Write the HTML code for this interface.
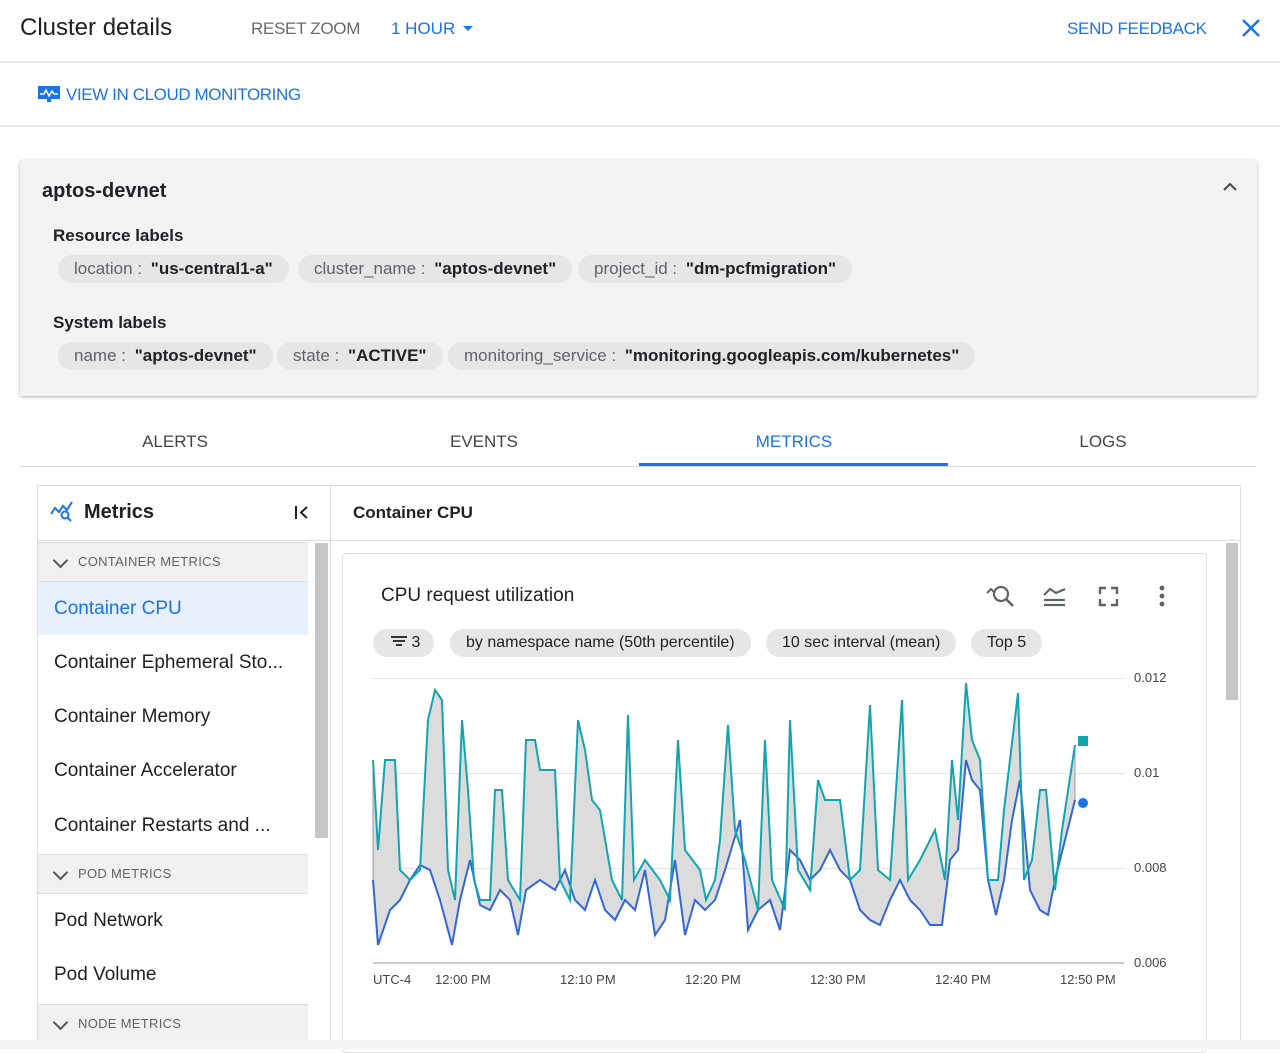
<!DOCTYPE html>
<html><head><meta charset="utf-8"><style>
*{box-sizing:border-box;margin:0;padding:0}
body{width:1280px;height:1049px;overflow:hidden;background:#fff;font-family:"Liberation Sans",Arial,sans-serif;color:#202124;position:relative}
.a{position:absolute;white-space:nowrap}
.chip{position:absolute;height:28px;border-radius:14px;background:#e6e6e6;font-size:17px;line-height:28px;padding:0 16px;color:#5f6368;white-space:nowrap}
.chip b{color:#202124;font-weight:bold;margin-left:4px}
.tab{position:absolute;top:432px;font-size:17px;color:#444;width:310px;text-align:center}
.blue{color:#1a73e8}
.item{position:absolute;left:54px;font-size:19px;color:#202124;white-space:nowrap}
.item.blue{color:#1a73e8}
.tab.blue{color:#1a73e8}
.sec{position:absolute;left:38px;width:270px;height:40px;background:#f1f1f1;border-top:1px solid #ddd;border-bottom:1px solid #ddd;font-size:13px;color:#5f6368;line-height:38px;padding-left:40px;letter-spacing:.3px}
.sec:before{content:"";position:absolute;left:17px;top:12px;width:9px;height:9px;border-right:2px solid #555;border-bottom:2px solid #555;transform:rotate(45deg)}
.pill{position:absolute;top:629px;height:28px;border-radius:14px;background:#e6e6e6;font-size:16px;line-height:28px;padding:0 16px;color:#202124;white-space:nowrap}
.yl{position:absolute;left:1134px;font-size:13px;color:#444}
.xl{position:absolute;top:972px;font-size:13px;color:#444}
</style></head><body>
<div class="a" style="left:20px;top:14px;font-size:24px">Cluster details</div>
<div class="a" style="left:251px;top:19px;font-size:17px;color:#6b6b6b;letter-spacing:-.3px">RESET ZOOM</div>
<div class="a blue" style="left:391px;top:19px;font-size:17px">1 HOUR</div>
<div class="a" style="left:463px;top:26px;border-left:5px solid transparent;border-right:5px solid transparent;border-top:5px solid #1a73e8"></div>
<div class="a blue" style="left:1067px;top:19px;font-size:17px;letter-spacing:-.3px">SEND FEEDBACK</div>
<svg class="a" style="left:1240px;top:17px" width="22" height="22" viewBox="0 0 22 22"><path d="M3 3L19 19M19 3L3 19" stroke="#1a73e8" stroke-width="2.4"/></svg>
<div class="a" style="left:0;top:61px;width:1280px;height:2px;background:#e8e8e8"></div>
<svg class="a" style="left:38px;top:86px" width="22" height="17" viewBox="0 0 22 17"><rect x="0" y="0" width="22" height="13" fill="#1a73e8"/><path d="M2 8L6 8L8 4L11 10L14 5L16 8L20 8" stroke="#fff" stroke-width="1.5" fill="none"/><rect x="9" y="13" width="4" height="3" fill="#1a73e8"/></svg>
<div class="a blue" style="left:66px;top:85px;font-size:17px;letter-spacing:-.4px">VIEW IN CLOUD MONITORING</div>
<div class="a" style="left:0;top:125px;width:1280px;height:2px;background:#e8e8e8"></div>

<div class="a" style="left:20px;top:160px;width:1237px;height:236px;background:#f3f3f3;box-shadow:0 1px 3px rgba(0,0,0,.3);border-radius:2px"></div>
<div class="a" style="left:42px;top:180px;font-size:20px;font-weight:bold">aptos-devnet</div>
<svg class="a" style="left:1221px;top:181px" width="18" height="12" viewBox="0 0 18 12"><path d="M3 9L9 3L15 9" stroke="#444" stroke-width="2" fill="none"/></svg>
<div class="a" style="left:53px;top:226px;font-size:17px;font-weight:bold">Resource labels</div>
<div class="chip" style="left:58px;top:255px">location : <b>"us-central1-a"</b></div>
<div class="chip" style="left:298px;top:255px">cluster_name : <b>"aptos-devnet"</b></div>
<div class="chip" style="left:578px;top:255px">project_id : <b>"dm-pcfmigration"</b></div>
<div class="a" style="left:53px;top:313px;font-size:17px;font-weight:bold">System labels</div>
<div class="chip" style="left:58px;top:342px">name : <b>"aptos-devnet"</b></div>
<div class="chip" style="left:277px;top:342px">state : <b>"ACTIVE"</b></div>
<div class="chip" style="left:448px;top:342px">monitoring_service : <b>"monitoring.googleapis.com/kubernetes"</b></div>

<div class="tab" style="left:20px">ALERTS</div>
<div class="tab" style="left:329px">EVENTS</div>
<div class="tab blue" style="left:639px">METRICS</div>
<div class="tab" style="left:948px">LOGS</div>
<div class="a" style="left:20px;top:466px;width:1237px;height:1px;background:#ddd"></div>
<div class="a" style="left:639px;top:463px;width:309px;height:3px;background:#1a73e8"></div>

<div class="a" style="left:37px;top:485px;width:1204px;height:560px;border:1px solid #ddd;border-bottom:none"></div>
<div class="a" style="left:330px;top:485px;width:1px;height:560px;background:#ddd"></div>
<div class="a" style="left:37px;top:540px;width:1204px;height:1px;background:#ddd"></div>
<svg class="a" style="left:50px;top:501px" width="24" height="22" viewBox="0 0 24 22"><path d="M1 13L5 7L9 11L13 5L17 9L22 1" stroke="#1a73e8" stroke-width="2" fill="none"/><circle cx="15" cy="14" r="3.5" stroke="#1a73e8" stroke-width="2" fill="#fff"/><path d="M17.5 16.5L21 20" stroke="#1a73e8" stroke-width="2"/></svg>
<div class="a" style="left:84px;top:501px;font-size:20px;font-weight:bold">Metrics</div>
<svg class="a" style="left:294px;top:505px" width="16" height="15" viewBox="0 0 16 15"><path d="M2 1V14M13 2L7 7.5L13 13" stroke="#222" stroke-width="2" fill="none"/></svg>
<div class="a" style="left:353px;top:503px;font-size:17px;font-weight:bold">Container CPU</div>

<div class="sec" style="top:542px">CONTAINER METRICS</div>
<div class="a" style="left:38px;top:582px;width:270px;height:53px;background:#e8f0fe"></div>
<div class="item blue" style="top:598px">Container CPU</div>
<div class="item" style="top:652px">Container Ephemeral Sto...</div>
<div class="item" style="top:706px">Container Memory</div>
<div class="item" style="top:760px">Container Accelerator</div>
<div class="item" style="top:815px">Container Restarts and ...</div>
<div class="sec" style="top:854px">POD METRICS</div>
<div class="item" style="top:910px">Pod Network</div>
<div class="item" style="top:964px">Pod Volume</div>
<div class="sec" style="top:1004px">NODE METRICS</div>
<div class="a" style="left:315px;top:543px;width:13px;height:295px;background:#c6c6c6"></div>
<div class="a" style="left:1226px;top:543px;width:12px;height:157px;background:#c6c6c6"></div>

<div class="a" style="left:342px;top:553px;width:865px;height:500px;border:1px solid #ddd;border-radius:4px"></div>
<div class="a" style="left:381px;top:585px;font-size:19px">CPU request utilization</div>
<svg class="a" style="left:984px;top:583px" width="200" height="28" viewBox="0 0 200 28"><circle cx="17" cy="11" r="7" stroke="#5f6368" stroke-width="2.2" fill="none"/><path d="M22 16L29 23" stroke="#5f6368" stroke-width="2.6"/><path d="M3 10L7 6L11 10" stroke="#5f6368" stroke-width="2" fill="none"/><path d="M60 12L66 6L72 10L81 6M60 17H81M60 22H81" stroke="#5f6368" stroke-width="2.2" fill="none"/><path d="M116 11V5H122M127 5H133V11M133 16V22H127M122 22H116V16" stroke="#5f6368" stroke-width="2.4" fill="none"/><circle cx="178" cy="5" r="2.4" fill="#5f6368"/><circle cx="178" cy="13" r="2.4" fill="#5f6368"/><circle cx="178" cy="21" r="2.4" fill="#5f6368"/></svg>
<div class="pill" style="left:373px;padding:0 14px 0 18px"><span style="display:inline-block;width:16px;vertical-align:middle;margin-top:-4px"><span style="display:block;height:2px;background:#333;margin:2px 0"></span><span style="display:block;height:2px;background:#333;margin:2px 2px"></span><span style="display:block;height:2px;background:#333;margin:2px 5px"></span></span> 3</div>
<div class="pill" style="left:450px">by namespace name (50th percentile)</div>
<div class="pill" style="left:766px">10 sec interval (mean)</div>
<div class="pill" style="left:971px">Top 5</div>

<svg class="a" style="left:0;top:0" width="1280" height="1049" viewBox="0 0 1280 1049">
<g stroke="#e4e4e4" stroke-width="1"><path d="M373 678.5H1124M373 773.5H1124M373 868.5H1124"/></g>
<path d="M373 963H1124" stroke="#999" stroke-width="1"/>
<g id="c"></g>
</svg>
<div class="yl" style="top:670px">0.012</div>
<div class="yl" style="top:765px">0.01</div>
<div class="yl" style="top:860px">0.008</div>
<div class="yl" style="top:955px">0.006</div>
<div class="xl" style="left:373px">UTC-4</div>
<div class="xl" style="left:435px">12:00 PM</div>
<div class="xl" style="left:560px">12:10 PM</div>
<div class="xl" style="left:685px">12:20 PM</div>
<div class="xl" style="left:810px">12:30 PM</div>
<div class="xl" style="left:935px">12:40 PM</div>
<div class="xl" style="left:1060px">12:50 PM</div>
<div class="a" style="left:0;top:1040px;width:1280px;height:9px;background:#f4f4f4"></div>
<script>
var t="373,760 378,850 385,760 395,760 400,870 410,880 420,870 428,720 435,690 442,700 448,870 455,900 462,720 468,790 474,880 480,900 490,900 495,790 502,790 508,880 520,900 526,740 535,740 540,770 555,770 560,880 570,900 578,720 585,750 592,800 600,810 612,880 622,900 628,715 634,880 645,860 660,880 670,900 678,740 685,850 700,870 706,900 715,880 720,840 728,725 735,830 745,860 758,910 765,740 772,880 785,910 790,720 798,870 810,890 818,780 825,800 840,800 850,880 860,870 870,705 878,870 890,880 902,700 908,880 920,860 935,830 945,880 952,760 958,820 966,683 972,740 980,760 988,880 998,880 1004,810 1010,760 1018,693 1024,880 1032,860 1040,790 1046,790 1055,890 1062,830 1075,745";
var b="373,880 378,945 390,910 400,900 410,880 420,865 430,870 440,900 452,945 460,900 470,860 480,905 490,910 500,890 510,900 518,935 526,890 540,880 555,890 565,870 575,900 585,910 595,880 605,910 615,920 625,900 635,910 645,870 655,935 665,920 675,860 685,935 695,900 705,910 715,900 725,870 740,820 748,930 758,910 770,900 780,930 790,850 800,860 810,880 820,870 830,850 840,870 850,880 860,910 870,920 880,925 890,900 900,880 910,900 920,910 930,925 942,925 950,860 958,850 966,760 972,780 980,790 988,880 996,915 1004,880 1012,820 1020,780 1030,890 1040,910 1048,915 1055,880 1065,840 1075,800";
var rb=b.split(" ").reverse().join(" ");
document.getElementById("c").innerHTML='<polygon points="'+t+' '+rb+'" fill="#dcdcdc" stroke="#999" stroke-width="1"/><polyline points="'+b+'" fill="none" stroke="#3367d6" stroke-width="2"/><polyline points="'+t+'" fill="none" stroke="#12a4af" stroke-width="2"/><rect x="1078" y="736" width="10" height="10" fill="#12a4af"/><circle cx="1083" cy="803" r="5" fill="#1a73e8"/>';
</script>
</body></html>
